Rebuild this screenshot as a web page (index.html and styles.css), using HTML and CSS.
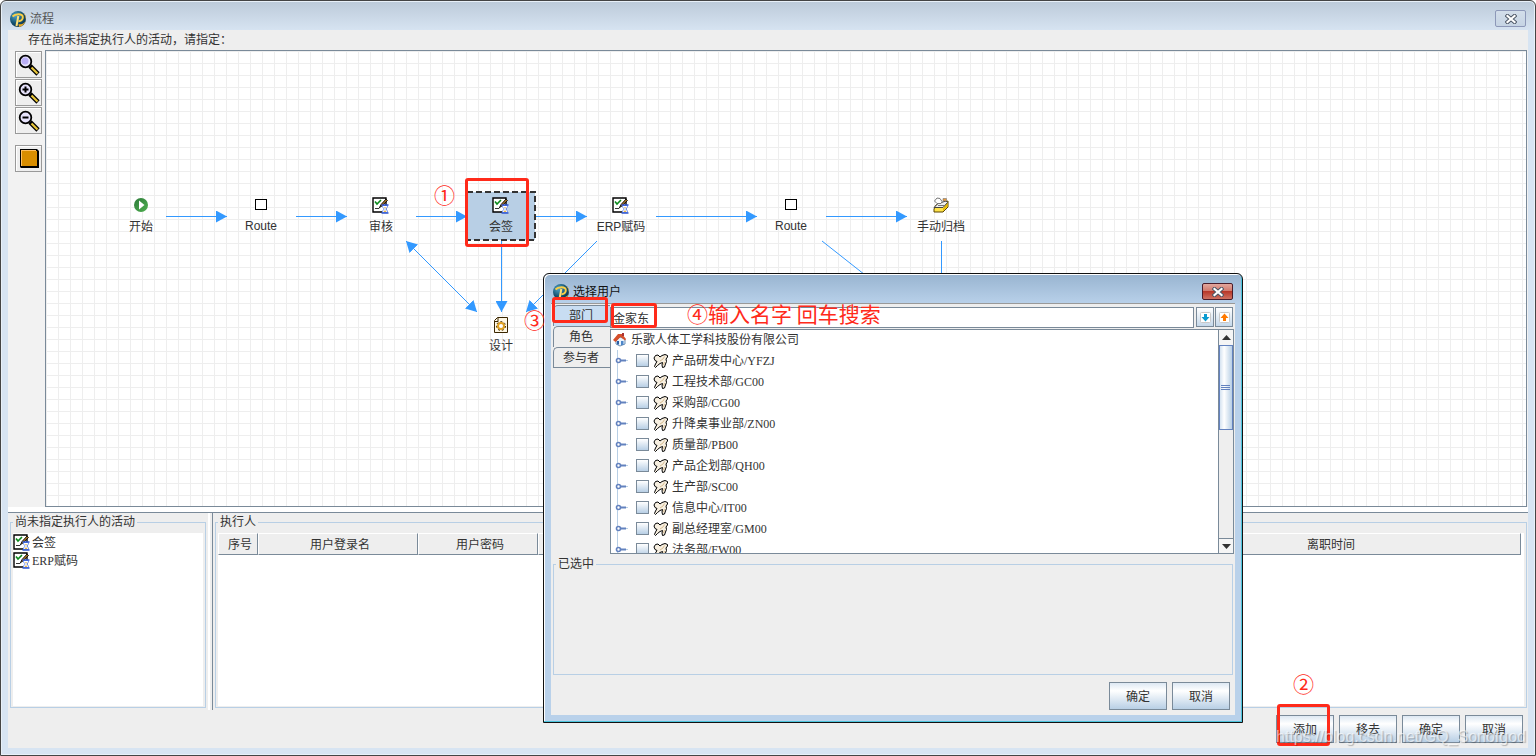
FILE: index.html
```html
<!DOCTYPE html>
<html lang="zh-CN">
<head>
    <meta charset="UTF-8">
    <meta name="viewport" content="width=device-width, initial-scale=1.0">
    <title>流程</title>
    <link rel="stylesheet" href="styles.css">
</head>
<body>
    <svg class="defs" xmlns="http://www.w3.org/2000/svg">
        <defs>
            <radialGradient id="ball" cx="0.35" cy="0.3" r="0.8">
                <stop offset="0" stop-color="#4fa3c8" />
                <stop offset="0.6" stop-color="#14506e" />
                <stop offset="1" stop-color="#0b2c44" />
            </radialGradient>
            <linearGradient id="green" x1="0" y1="0" x2="1" y2="1">
                <stop offset="0" stop-color="#2d7a3a" />
                <stop offset="1" stop-color="#4fb04f" />
            </linearGradient>
            <marker id="arrow" markerUnits="userSpaceOnUse" markerWidth="12" markerHeight="12" refX="11" refY="6" orient="auto-start-reverse">
                <polygon points="0 0, 11 6, 0 12" fill="#3399ff" />
            </marker>
            <symbol id="logo" viewBox="0 0 16 16">
                <circle cx="8" cy="8" r="8" fill="url(#ball)" />
                <path d="M13 2A8 8 0 0 1 9 15.900L8.500 13A6 6 0 0 0 13 2Z" fill="#e8a928" />
                <path d="M2.500 5.500C5 2.800 12.500 2.200 12.800 6 13 9 10.500 10.300 8.500 10.200" fill="none" stroke="#fbcf45" stroke-width="2" />
                <path d="M8.300 5 6.500 15" stroke="#ffe27a" stroke-width="2" />
            </symbol>
            <symbol id="lens" viewBox="0 0 22 22">
                <path d="M12 12 20 20" stroke="#000" stroke-width="4.600" />
                <path d="M13.500 13.500 19.500 19.500" stroke="#e8c63a" stroke-width="2.200" />
                <circle cx="7.500" cy="7.500" r="5.800" fill="#e6e2fb" stroke="#000" stroke-width="1.800" />
            </symbol>
            <symbol id="task" viewBox="0 0 17 17">
                <path d="M1 1H14V15H1Z" fill="#fff" stroke="#000" stroke-width="1.400" />
                <path d="M3 4.500 5 7 9 3" fill="none" stroke="#0a8a1c" stroke-width="1.600" />
                <path d="M3 11.500H7L8 10" fill="none" stroke="#333" />
                <path d="M7.500 10.500 9 7.500 14 2 15.500 3.500 10 9Z" fill="#9a6a20" stroke="#000" stroke-width="0.800" />
                <path d="M10.500 8.500H15.500V10L13.800 12 15.500 14V15.500H10.500V14L12.200 12 10.500 10Z" fill="#fff" stroke="#7d9cf0" />
                <path d="M9.500 8H16.500M9.500 16H16.500" stroke="#2f55d0" stroke-width="1.600" />
                <path d="M12 10H14L13 11.500ZM11.500 15 13 13 14.500 15Z" fill="#e9b44c" />
            </symbol>
            <symbol id="dept" viewBox="0 0 16 16">
                <path d="M1 5 2.500 2.500 5 2 7 4 9 2.500 12 1.500 14.500 2.500 14.500 4 13 6 13.500 8.500 12.500 11 11.500 14 9.500 14.500 9 12 9.500 9.500 7 10.500 4.500 12.500 2.500 14.500 1.500 13.500 2.500 11 4 8.500 2 7.500Z" fill="#f7efe0" stroke="#000" />
                <path d="M7 8 10 6 11.500 3.500M10.500 12 11.500 9" fill="none" stroke="#d8bd92" />
            </symbol>
            <symbol id="handle" viewBox="0 0 14 21">
                <path d="M2.500 0V21" stroke="#b8cfe5" />
                <path d="M6 10.500H13" stroke="#b8cfe5" />
                <path d="M5 10.500H11" stroke="#6382bf" stroke-width="2" />
                <circle cx="3.500" cy="10.500" r="2" fill="#fff" stroke="#6382bf" stroke-width="1.600" />
            </symbol>
            <symbol id="cross" viewBox="0 0 12 10">
                <path d="M2.500 2 9.500 8M9.500 2 2.500 8" stroke="#4d5766" stroke-width="4.200" stroke-linecap="square" />
                <path d="M2.500 2 9.500 8M9.500 2 2.500 8" stroke="#fff" stroke-width="2.200" stroke-linecap="square" />
            </symbol>
        </defs>
    </svg>

    <div class="window">
        <header class="titlebar">
            <svg class="logo"><use href="#logo" /></svg>
            <span class="title">流程</span>
            <button class="close" type="button" aria-label="关闭"><svg width="12" height="10"><use href="#cross" /></svg></button>
        </header>

        <main class="content">
            <p class="hint">存在尚未指定执行人的活动，请指定：</p>

            <section class="workspace">
                <div class="toolbar">
                    <button class="tool" type="button" aria-label="缩放"><svg width="22" height="22"><use href="#lens" /><circle cx="7" cy="7" r="3.500" fill="#b9aef5" /></svg></button>
                    <button class="tool" type="button" aria-label="放大"><svg width="22" height="22"><use href="#lens" /><path d="M4.500 7.500H10.500M7.500 4.500V10.500" stroke="#000" stroke-width="2" /></svg></button>
                    <button class="tool" type="button" aria-label="缩小"><svg width="22" height="22"><use href="#lens" /><path d="M4.500 7.500H10.500" stroke="#000" stroke-width="2" /></svg></button>
                    <button class="tool tool-fill" type="button" aria-label="填充"><svg width="22" height="22"><path d="M2 1H19L21 3V20H3L2 19Z" fill="#000" /><path d="M3 2H18V18H3Z" fill="#ffc060" /><path d="M4 3H19V18H4Z" fill="#d98e00" /></svg></button>
                </div>

                <div class="canvas">
                    <svg class="diagram" xmlns="http://www.w3.org/2000/svg">
                        <g class="edges">
                            <line x1="120" y1="165.500" x2="181" y2="165.500" marker-end="url(#arrow)" />
                            <line x1="250" y1="165.500" x2="301" y2="165.500" marker-end="url(#arrow)" />
                            <line x1="370" y1="165.500" x2="421" y2="165.500" marker-end="url(#arrow)" />
                            <line x1="490" y1="165.500" x2="541" y2="165.500" marker-end="url(#arrow)" />
                            <line x1="610" y1="165.500" x2="711" y2="165.500" marker-end="url(#arrow)" />
                            <line x1="780" y1="165.500" x2="861" y2="165.500" marker-end="url(#arrow)" />
                            <line x1="360" y1="190" x2="431" y2="261" marker-start="url(#arrow)" marker-end="url(#arrow)" />
                            <line x1="455.500" y1="190" x2="455.500" y2="261" marker-end="url(#arrow)" />
                            <line x1="551" y1="190" x2="480" y2="261" marker-end="url(#arrow)" />
                            <line x1="776" y1="190" x2="866" y2="261" marker-end="url(#arrow)" />
                            <line x1="895.500" y1="190" x2="895.500" y2="261" marker-end="url(#arrow)" />
                        </g>
                        <g class="node">
                            <circle cx="95" cy="154" r="7" fill="url(#green)" />
                            <path d="M93 149.500 98.500 154 93 158.500Z" fill="#fff" />
                            <text x="95" y="180">开始</text>
                        </g>
                        <g class="node">
                            <rect class="route" x="209.500" y="148.500" width="11" height="10" />
                            <text x="215" y="179">Route</text>
                        </g>
                        <g class="node">
                            <use href="#task" x="326" y="146" width="17" height="17" />
                            <text x="335" y="180">审核</text>
                        </g>
                        <g class="node">
                            <rect class="selected" x="421" y="141" width="68" height="48" />
                            <use href="#task" x="446" y="146" width="17" height="17" />
                            <text x="455" y="180">会签</text>
                        </g>
                        <g class="node">
                            <use href="#task" x="566" y="146" width="17" height="17" />
                            <text x="575" y="180">ERP赋码</text>
                        </g>
                        <g class="node">
                            <rect class="route" x="739.500" y="148.500" width="11" height="10" />
                            <text x="745" y="179">Route</text>
                        </g>
                        <g class="node">
                            <path d="M888 158 890 154 902 150 902 156 897 161H888Z" fill="#ffe34a" stroke="#5a4500" />
                            <path d="M897 157.500 901.500 151.500V155.500L897 160Z" fill="#e6b800" />
                            <path d="M888 156.500 892 152.500 900 150 901.500 151.500 897 156.500Z" fill="#eee" stroke="#444" />
                            <path d="M888.500 150 891 147 894 147.500 896 150.500 895 152.500H891Z" fill="#fff" stroke="#777" />
                            <path d="M897 147.500H900.500V150H897Z" fill="#e89a3c" stroke="#777" stroke-width="0.600" />
                            <path d="M892 154.500H898" stroke="#777" />
                            <text x="895" y="180">手动归档</text>
                        </g>
                        <g class="node">
                            <path d="M451.500 266.500H461.500V281.500H448.500V269.500Z" fill="#fff8e6" stroke="#3a2600" />
                            <path d="M448.500 270.500H452V266.500" fill="none" stroke="#3a2600" />
                            <circle cx="455" cy="275" r="3" fill="#fff" stroke="#e0a020" stroke-width="2" />
                            <circle cx="455" cy="275" r="4.500" fill="none" stroke="#4a3000" stroke-dasharray="2 2" />
                            <text x="455" y="299">设计</text>
                        </g>
                    </svg>
                </div>
            </section>

            <section class="lower">
                <fieldset class="panel pending">
                    <legend>尚未指定执行人的活动</legend>
                    <ul class="list">
                        <li><svg width="17" height="17"><use href="#task" /></svg>会签</li>
                        <li><svg width="17" height="17"><use href="#task" /></svg>ERP赋码</li>
                    </ul>
                </fieldset>
                <div class="divider"></div>
                <fieldset class="panel executors">
                    <legend>执行人</legend>
                    <div class="table-box">
                        <table>
                            <colgroup><col class="c-no"><col class="c-login"><col class="c-pass"><col><col class="c-leave"></colgroup>
                            <thead>
                                <tr><th>序号</th><th>用户登录名</th><th>用户密码</th><th></th><th>离职时间</th></tr>
                            </thead>
                        </table>
                    </div>
                </fieldset>
            </section>

            <footer class="actions">
                <button class="btn" type="button">添加</button>
                <button class="btn" type="button">移去</button>
                <button class="btn" type="button">确定</button>
                <button class="btn" type="button">取消</button>
            </footer>
        </main>
    </div>

    <div class="dialog" role="dialog" aria-labelledby="dialogTitle">
        <header class="titlebar">
            <svg class="logo"><use href="#logo" /></svg>
            <span class="title" id="dialogTitle">选择用户</span>
            <button class="close" type="button" aria-label="关闭"><svg width="12" height="10"><use href="#cross" /></svg></button>
        </header>
        <div class="dialog-content">
            <div class="picker">
                <nav class="tabs">
                    <button class="tab active" type="button">部门</button>
                    <button class="tab" type="button">角色</button>
                    <button class="tab" type="button">参与者</button>
                </nav>
                <div class="browser">
                    <div class="search">
                        <input type="text" aria-label="搜索" value="金家东">
                        <button class="step" type="button" aria-label="下一个"><svg width="11" height="11"><rect x="0.500" y="0.500" width="10" height="10" rx="1" fill="#fff" stroke="#c8c8c8" /><path d="M4 2H7V5H9.500L5.500 9.500 1.500 5H4Z" fill="#0a9bd0" /></svg></button>
                        <button class="step" type="button" aria-label="上一个"><svg width="11" height="11"><rect x="0.500" y="0.500" width="10" height="10" rx="1" fill="#fff" stroke="#c8c8c8" /><path d="M4 9H7V6H9.500L5.500 1.500 1.500 6H4Z" fill="#ff7a00" /></svg></button>
                    </div>
                    <div class="tree-box">
                        <ul class="tree">
                            <li class="root">
                                <svg width="14" height="14"><path d="M3 8 7 4 12 6V11L7 13 3 11Z" fill="#e9f2fb" stroke="#6b8fb5" /><path d="M0 7 5 1 9 1 13 6 12 7.500 7.500 4 2.500 9Z" fill="#d5502c" /><path d="M9 0H11V3H9Z" fill="#a33" /><path d="M4 8H6V11.500H4Z" fill="#2d5fa5" /><path d="M8 8H10.500V12H8Z" fill="#4d86c9" /></svg>
                                乐歌人体工学科技股份有限公司
                            </li>
                            <li><svg class="handle"><use href="#handle" /></svg><label><input type="checkbox"><svg class="dept"><use href="#dept" /></svg>产品研发中心/YFZJ</label></li>
                            <li><svg class="handle"><use href="#handle" /></svg><label><input type="checkbox"><svg class="dept"><use href="#dept" /></svg>工程技术部/GC00</label></li>
                            <li><svg class="handle"><use href="#handle" /></svg><label><input type="checkbox"><svg class="dept"><use href="#dept" /></svg>采购部/CG00</label></li>
                            <li><svg class="handle"><use href="#handle" /></svg><label><input type="checkbox"><svg class="dept"><use href="#dept" /></svg>升降桌事业部/ZN00</label></li>
                            <li><svg class="handle"><use href="#handle" /></svg><label><input type="checkbox"><svg class="dept"><use href="#dept" /></svg>质量部/PB00</label></li>
                            <li><svg class="handle"><use href="#handle" /></svg><label><input type="checkbox"><svg class="dept"><use href="#dept" /></svg>产品企划部/QH00</label></li>
                            <li><svg class="handle"><use href="#handle" /></svg><label><input type="checkbox"><svg class="dept"><use href="#dept" /></svg>生产部/SC00</label></li>
                            <li><svg class="handle"><use href="#handle" /></svg><label><input type="checkbox"><svg class="dept"><use href="#dept" /></svg>信息中心/IT00</label></li>
                            <li><svg class="handle"><use href="#handle" /></svg><label><input type="checkbox"><svg class="dept"><use href="#dept" /></svg>副总经理室/GM00</label></li>
                            <li><svg class="handle"><use href="#handle" /></svg><label><input type="checkbox"><svg class="dept"><use href="#dept" /></svg>法务部/FW00</label></li>
                        </ul>
                        <div class="scrollbar">
                            <button type="button" aria-label="向上滚动"><svg width="9" height="5"><path d="M0 5 4.500 0 9 5Z" fill="#333" /></svg></button>
                            <div class="thumb"><svg width="10" height="6"><path d="M0 0.500H9M0 2.500H9M0 4.500H9" stroke="#6382bf" /></svg></div>
                            <button class="down" type="button" aria-label="向下滚动"><svg width="9" height="5"><path d="M0 0 4.500 5 9 0Z" fill="#333" /></svg></button>
                        </div>
                    </div>
                </div>
            </div>
            <fieldset class="panel chosen">
                <legend>已选中</legend>
            </fieldset>
            <footer class="actions">
                <button class="btn" type="button">确定</button>
                <button class="btn" type="button">取消</button>
            </footer>
        </div>
    </div>

    <!-- 操作步骤标注 -->
    <div class="frame frame-node"></div>
    <div class="frame frame-tab"></div>
    <div class="frame frame-search"></div>
    <div class="frame frame-add"></div>
    <span class="note note-1">①</span>
    <span class="note note-2">②</span>
    <span class="note note-3">③</span>
    <span class="note note-4">④输入名字 回车搜索</span>
    <span class="watermark">https://blog.csdn.net/GQ_Sonofgod</span>
</body>
</html>
```

FILE: styles.css
```css
* {
    box-sizing: border-box;
}
body {
    margin: 0;
    position: relative;
    font-family: "Liberation Sans", "Noto Sans CJK SC", sans-serif;
    font-size: 12px;
    line-height: 18px;
    color: #333;
    background: #fff;
}
button,
input {
    font: inherit;
    color: inherit;
    margin: 0;
    padding: 0;
}
button {
    display: flex;
    align-items: center;
    justify-content: center;
}
ul {
    list-style: none;
    margin: 0;
    padding: 0;
}
svg {
    flex: none;
}
.defs {
    position: absolute;
    width: 0;
    height: 0;
}

/* 主窗口 */
.window {
    display: flex;
    flex-direction: column;
    min-height: 100vh;
    padding: 0 7px 7px;
    border: 1px solid #444;
    border-radius: 6px 6px 0 0;
    background: linear-gradient(#bccad9, #d7e4f2 30px);
    box-shadow: inset 0 0 0 1px #e8f0f8;
}
.titlebar {
    display: flex;
    align-items: center;
    height: 29px;
    padding: 6px 2px 0 2px;
}
.logo {
    width: 16px;
    height: 16px;
    margin-right: 4px;
}
.title {
    flex: 1;
    color: #555;
}
.close {
    width: 31px;
    height: 17px;
    border: 1px solid #8d98b8;
    border-radius: 2px;
    background: linear-gradient(#d3deea, #c6d4e4);
}
.content {
    flex: 1;
    display: flex;
    flex-direction: column;
    background: #eee;
}
.hint {
    margin: 0;
    padding: 1px 20px;
    height: 20px;
}
.workspace {
    flex: 1;
    display: flex;
    padding-right: 1px;
    background: #f2f2f2;
}
.toolbar {
    display: flex;
    flex-direction: column;
    gap: 1px;
    width: 37px;
    padding: 1px 0 0 7px;
}
.tool {
    width: 27px;
    height: 27px;
    border: 1px solid #999;
    background: #eee;
    box-shadow: inset 1px 1px 0 #fff;
}
.tool-fill {
    margin-top: 10px;
}
.canvas {
    flex: 1;
    border: 1px solid #7a8a99;
    background-color: #fff;
    background-image: linear-gradient(#eee 1px, transparent 1px), linear-gradient(90deg, #eee 1px, transparent 1px);
    background-size: 12px 12px;
}
.diagram {
    display: block;
    width: 100%;
    height: 320px;
}
.edges line {
    stroke: #3399ff;
}
.node text {
    text-anchor: middle;
    fill: #333;
}
.route {
    fill: #fff;
    stroke: #000;
}
.selected {
    fill: #b8cfe5;
    stroke: #333;
    stroke-width: 2;
    stroke-dasharray: 6 3;
}

/* 下方面板 */
.lower {
    display: flex;
    height: 203px;
    padding: 6px 1px 0 2px;
    background: linear-gradient(#fff 5px, #7a8a99 5px, #7a8a99 6px, #eee 6px);
}
.panel {
    min-width: 0;
    margin: 0 0 2px;
    padding: 0 2px 2px;
    border: 1px solid #b8cfe5;
}
.panel legend {
    height: 18px;
    padding: 0 2px;
}
.pending {
    width: 196px;
}
.list {
    height: 173px;
    margin-top: 2px;
    padding-top: 1px;
    background: #fff;
}
.list,
.tree {
    font-family: "Liberation Serif", "Noto Sans CJK SC", serif;
}
.list li {
    display: flex;
    gap: 2px;
    height: 18px;
}
.divider {
    width: 5px;
    margin: 0 2px;
    border-left: 2px solid #fff;
    border-right: 1px solid #7a8a99;
}
.executors {
    flex: 1;
}
.table-box {
    height: 173px;
    margin-top: 2px;
    padding-right: 3px;
    background: #fff;
}
table {
    width: 100%;
    table-layout: fixed;
    border-collapse: separate;
    border-spacing: 0;
}
.c-no {
    width: 40px;
}
.c-login {
    width: 160px;
}
.c-pass {
    width: 120px;
}
.c-leave {
    width: 384px;
}
th {
    height: 22px;
    padding: 2px 0 0 4px;
    font-weight: normal;
    background: #eee;
    border: 1px solid #7a8a99;
    border-top-color: #fff;
    border-left-color: #fff;
}
.actions {
    display: flex;
    justify-content: flex-end;
    gap: 5px;
    padding: 5px 5px;
}
.content > .actions {
    height: 38px;
}
.btn {
    width: 58px;
    height: 28px;
    padding-top: 2px;
    border: 1px solid #7a8a99;
    background: linear-gradient(#dde8f3, #fff 30%, #b8cfe5);
}

/* 选择用户对话框 */
.dialog {
    position: absolute;
    left: 543px;
    top: 273px;
    width: 700px;
    padding: 0 7px 7px;
    border: 1px solid #111;
    border-radius: 6px 6px 0 0;
    background: linear-gradient(#98b4d0, #b9d1ea 30px);
    box-shadow: inset -1px -1px 0 #4cc4dc, inset 1px 1px 0 #fff;
}
.dialog .title {
    color: #111;
}
.dialog .close {
    border-color: #4a1c2a;
    background: linear-gradient(#e3a79d, #d0786c 48%, #b8382a 50%, #cf7263);
}
.dialog-content {
    padding-top: 1px;
    border-top: 1px solid #999;
    background: #eee;
}
.picker {
    display: flex;
    padding: 0 1px 0 2px;
}
.tabs {
    width: 57px;
}
.tab {
    width: 57px;
    height: 21px;
    padding-right: 2px;
    border: 1px solid #7a8a99;
    border-width: 1px 0 0 1px;
    border-top-left-radius: 5px;
    background: #eee;
}
.tab.active {
    background: #c8ddf2;
}
.tab:last-child {
    border-bottom-width: 1px;
}
.browser {
    flex: 1;
    padding-top: 2px;
}
.search {
    display: flex;
    gap: 1px;
    padding-right: 1px;
}
.search input {
    flex: 1;
    min-width: 0;
    height: 21px;
    padding: 0 2px;
    margin-right: 1px;
    border: 1px solid #7a8a99;
    background: #fff;
}
.step {
    width: 18px;
    height: 20px;
    border: 1px solid #7a8a99;
    background: linear-gradient(#fff, #c5d8ea);
}
.tree-box {
    display: flex;
    height: 225px;
    margin-top: 1px;
    border: 1px solid #7a8a99;
    background: #fff;
}
.tree {
    flex: 1;
    overflow: hidden;
}
.tree li {
    display: flex;
    align-items: center;
    height: 21px;
    padding-left: 4px;
}
.tree .root {
    gap: 4px;
    height: 20px;
    padding-left: 2px;
}
.tree label {
    display: flex;
    align-items: center;
}
.tree input {
    appearance: none;
    width: 13px;
    height: 13px;
    margin: 0 4px 0 7px;
    border: 1px solid #7a8a99;
    background: linear-gradient(#fff, #b8cfe5);
}
.handle {
    width: 14px;
    height: 21px;
}
.dept {
    width: 16px;
    height: 16px;
    margin-right: 3px;
}
.scrollbar {
    display: flex;
    flex-direction: column;
    width: 15px;
    border-left: 1px solid #7a8a99;
    background: #eee;
}
.scrollbar button {
    height: 15px;
    border: 0;
    background: #f5f5f5;
}
.scrollbar .down {
    margin-top: auto;
    border-top: 1px solid #7a8a99;
}
.thumb {
    display: flex;
    align-items: center;
    justify-content: center;
    height: 85px;
    border: 1px solid #6382bf;
    background: linear-gradient(90deg, #d5e3f1, #fff 35%, #b8cfe5);
}
.chosen {
    height: 120px;
    margin: 1px 2px 2px;
}
.dialog .actions {
    padding: 5px;
}

/* 标注 */
.frame {
    position: absolute;
    border: 3px solid #ff2a1a;
    border-radius: 3px;
}
.frame-node {
    left: 465px;
    top: 178px;
    width: 64px;
    height: 69px;
}
.frame-tab {
    left: 552px;
    top: 297px;
    width: 56px;
    height: 26px;
}
.frame-search {
    left: 611px;
    top: 303px;
    width: 46px;
    height: 25px;
}
.frame-add {
    left: 1277px;
    top: 704px;
    width: 53px;
    height: 42px;
}
.note {
    position: absolute;
    font-family: "Noto Sans CJK SC", sans-serif;
    font-size: 21px;
    line-height: 24px;
    white-space: nowrap;
    color: #ff2a1a;
}
.note-1 {
    left: 434px;
    top: 182px;
}
.note-2 {
    left: 1293px;
    top: 671px;
}
.note-3 {
    left: 524px;
    top: 307px;
}
.note-4 {
    left: 687px;
    top: 301px;
}
.watermark {
    position: absolute;
    right: 10px;
    top: 728px;
    font-size: 16px;
    color: rgba(255, 255, 255, 0.6);
    text-shadow: 1px 1px 1px rgba(0, 0, 0, 0.25);
}
```
